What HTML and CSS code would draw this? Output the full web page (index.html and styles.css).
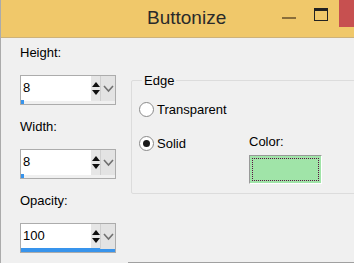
FILE: index.html
```html
<!DOCTYPE html>
<html lang="en">
<head>
    <meta charset="UTF-8">
    <title>Buttonize</title>
    <link rel="stylesheet" href="styles.css">
</head>
<body>
    <div class="window">
        <div class="titlebar">
            <div class="title">Buttonize</div>
            <div class="min-btn"><span></span></div>
            <div class="max-btn"><span></span></div>
            <div class="close-btn"></div>
        </div>
        <div class="content">
            <div class="left-col">
                <div class="label">Height:</div>
                <div class="spin">
                    <div class="spin-top">
                        <div class="spin-value">8</div>
                        <div class="arrows">
                            <div class="arrow up"></div>
                            <div class="arrow down"></div>
                        </div>
                    </div>
                    <div class="bar"><div class="fill" style="width: 3%"></div></div>
                    <div class="drop">
                        <svg width="11" height="8" viewBox="0 0 11 8"><path d="M1 1 L5.5 6 L10 1" fill="none" stroke="#707070" stroke-width="1.6"/></svg>
                    </div>
                </div>
                <div class="label">Width:</div>
                <div class="spin">
                    <div class="spin-top">
                        <div class="spin-value">8</div>
                        <div class="arrows">
                            <div class="arrow up"></div>
                            <div class="arrow down"></div>
                        </div>
                    </div>
                    <div class="bar"><div class="fill" style="width: 3%"></div></div>
                    <div class="drop">
                        <svg width="11" height="8" viewBox="0 0 11 8"><path d="M1 1 L5.5 6 L10 1" fill="none" stroke="#707070" stroke-width="1.6"/></svg>
                    </div>
                </div>
                <div class="label">Opacity:</div>
                <div class="spin">
                    <div class="spin-top">
                        <div class="spin-value">100</div>
                        <div class="arrows">
                            <div class="arrow up"></div>
                            <div class="arrow down"></div>
                        </div>
                    </div>
                    <div class="bar"><div class="fill" style="width: 100%"></div></div>
                    <div class="drop">
                        <svg width="11" height="8" viewBox="0 0 11 8"><path d="M1 1 L5.5 6 L10 1" fill="none" stroke="#707070" stroke-width="1.6"/></svg>
                    </div>
                </div>
            </div>
            <div class="right-col">
                <fieldset class="group">
                    <legend>Edge</legend>
                    <div class="radio-row">
                        <span class="radio"></span>Transparent
                    </div>
                    <div class="solid-row">
                        <div class="radio-row">
                            <span class="radio checked"></span>Solid
                        </div>
                        <div class="color-box">
                            <div class="color-label">Color:</div>
                            <div class="swatch"><div class="focus"></div></div>
                        </div>
                    </div>
                </fieldset>
                <div class="bottom-line"></div>
            </div>
        </div>
    </div>
</body>
</html>
```

FILE: styles.css
```css
html, body {
    margin: 0;
    padding: 0;
}
body {
    width: 354px;
    height: 263px;
    overflow: hidden;
    background-color: #F0F0F0;
    font-family: "Liberation Sans", Arial, sans-serif;
    font-size: 13px;
    color: #000;
}
.window {
    height: 263px;
    border-left: 1px solid #ABABAB;
    box-sizing: border-box;
    overflow: hidden;
}
.titlebar {
    height: 37px;
    background-color: #F0C86A;
    border-bottom: 1px solid #CDB27A;
    display: flex;
    align-items: flex-start;
    position: relative;
}
.title {
    position: absolute;
    left: 146px;
    top: 7px;
    font-family: "Liberation Sans", Arial, sans-serif;
    font-size: 19px;
    color: #2A2A2A;
}
.min-btn {
    margin-left: 279px;
    width: 18px;
    height: 27px;
    display: flex;
    align-items: center;
    justify-content: center;
}
.min-btn span {
    width: 14px;
    height: 2px;
    background-color: #8A6E3A;
    margin-top: 9px;
}
.max-btn {
    margin-left: 16px;
    width: 16px;
    height: 27px;
    padding-top: 8px;
    box-sizing: border-box;
}
.max-btn span {
    display: block;
    width: 12px;
    height: 9px;
    border: 1px solid #222;
    border-top-width: 3px;
}
.close-btn {
    margin-left: auto;
    width: 15px;
    height: 27px;
    background-color: #C75050;
}
.content {
    display: flex;
    height: 225px;
}
.left-col {
    width: 110px;
    padding-left: 19px;
    padding-top: 7px;
}
.label {
    height: 16px;
    line-height: 16px;
    margin-bottom: 14px;
}
.spin {
    position: relative;
    width: 96px;
    height: 30px;
    border: 1px solid #ACACAC;
    box-sizing: border-box;
    background-color: #F0F0F0;
    margin-bottom: 14px;
}
.spin-top {
    display: flex;
    width: 81px;
    height: 25px;
    background-color: #fff;
}
.spin-value {
    flex: 1;
    padding-left: 2px;
    padding-top: 4px;
    font-size: 13px;
}
.arrows {
    width: 10px;
    display: flex;
    flex-direction: column;
    justify-content: center;
    gap: 3px;
    background-color: #E6E6E6;
    margin-right: 1px;
}
.arrow {
    width: 0;
    height: 0;
    margin-left: 1px;
    border-left: 4px solid transparent;
    border-right: 4px solid transparent;
}
.arrow.up {
    border-bottom: 5px solid #111;
}
.arrow.down {
    border-top: 5px solid #111;
}
.bar {
    position: absolute;
    left: 0;
    bottom: 0;
    width: 94px;
    height: 4px;
}
.fill {
    height: 4px;
    background-color: #3894EC;
    min-width: 2px;
}
.drop {
    position: absolute;
    right: 0;
    top: 0;
    width: 14px;
    height: 25px;
    background-color: #E3E3E3;
    border-left: 1px solid #CFCFCF;
    display: flex;
    align-items: center;
    justify-content: center;
}
.right-col {
    flex: 1;
    padding-top: 35px;
    display: flex;
    flex-direction: column;
}
.group {
    margin: 0;
    margin-left: 1px;
    margin-right: -4px;
    height: 121px;
    box-sizing: border-box;
    border: 1px solid #DCDCDC;
    border-radius: 2px;
    padding: 4px 0 0 7px;
}
.group legend {
    padding: 0 2px;
    margin-left: 3px;
    font-size: 13px;
}
.radio-row {
    display: flex;
    align-items: center;
    height: 18px;
    margin-top: 8px;
}
.radio {
    width: 13px;
    height: 13px;
    border: 1px solid #8A8A8A;
    border-radius: 50%;
    background-color: #fff;
    margin-right: 3px;
    position: relative;
}
.radio.checked::after {
    content: "";
    position: absolute;
    left: 3px;
    top: 3px;
    width: 7px;
    height: 7px;
    border-radius: 50%;
    background-color: #1A1A1A;
}
.solid-row {
    display: flex;
    margin-top: 16px;
}
.solid-row .radio-row {
    margin-top: 0;
    width: 110px;
}
.color-label {
    height: 16px;
    line-height: 16px;
    margin-bottom: 5px;
}
.swatch {
    width: 73px;
    height: 29px;
    background-color: #A0E4A8;
    border: 1px solid #999;
    border-right-color: #fff;
    border-bottom-color: #fff;
    box-sizing: border-box;
    padding: 2px;
}
.focus {
    height: 100%;
    border: 1px dotted #5A1040;
    box-sizing: border-box;
}
.bottom-line {
    margin-top: auto;
    height: 1px;
    background-color: #A0A0A0;
    margin-left: -2px;
}
```
